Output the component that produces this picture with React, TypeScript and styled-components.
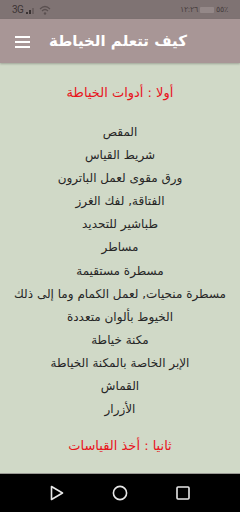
import React from 'react';
import styled, { createGlobalStyle } from 'styled-components';

const GlobalStyle = createGlobalStyle`
  html, body {
    margin: 0;
    padding: 0;
    background: #d0d9c7;
  }
  body {
    font-family: "DejaVu Sans", "Noto Sans", sans-serif;
  }
`;

const tools = [
  'المقص',
  'شريط القياس',
  'ورق مقوى لعمل الباترون',
  'الفتاقة, لفك الغرز',
  'طباشير للتحديد',
  'مساطر',
  'مسطرة مستقيمة',
  'مسطرة منحيات, لعمل الكمام وما إلى ذلك',
  'الخيوط بألوان متعددة',
  'مكنة خياطة',
  'الإبر الخاصة بالمكنة الخياطة',
  'القماش',
  'الأزرار',
];

const App = () => {
  return (
    <Screen>
      <GlobalStyle />
      <StatusBar>
        <StatusLeft>
          <span>3G</span>
          <svg width="10" height="8" viewBox="0 0 10 8">
            <rect x="0" y="6" width="2" height="2" fill="#3a3333" />
            <rect x="3" y="4" width="2" height="4" fill="#3a3333" />
            <rect x="6" y="2" width="2" height="6" fill="#6a5f5f" />
          </svg>
          <svg width="12" height="10" viewBox="0 0 12 10">
            <path d="M1 4 Q6 -1 11 4" stroke="#5a5050" strokeWidth="1.2" fill="none" />
            <path d="M3 6 Q6 3 9 6" stroke="#5a5050" strokeWidth="1.2" fill="none" />
            <circle cx="6" cy="8.5" r="1.2" fill="#5a5050" />
          </svg>
        </StatusLeft>
        <StatusRight>
          <span>١٢:٢٦</span>
          <Battery />
          <span>٥٥٪</span>
        </StatusRight>
      </StatusBar>
      <AppBar>
        <Title>كيف تتعلم الخياطة</Title>
        <Menu>
          <i />
          <i />
          <i />
        </Menu>
      </AppBar>
      <Content>
        <Heading>أولا : أدوات الخياطة</Heading>
        <List>
          {tools.map((t) => (
            <Item key={t}>{t}</Item>
          ))}
        </List>
        <Heading>ثانيا : أخذ القياسات</Heading>
      </Content>
      <NavBar>
        <svg width="14" height="16" viewBox="0 0 14 16">
          <path d="M1.5 1.5 L12.5 8 L1.5 14.5 Z" stroke="#e8e8e8" strokeWidth="1.6" fill="none" strokeLinejoin="round" />
        </svg>
        <svg width="16" height="16" viewBox="0 0 16 16">
          <circle cx="8" cy="8" r="6.6" stroke="#e8e8e8" strokeWidth="1.6" fill="none" />
        </svg>
        <svg width="14" height="14" viewBox="0 0 14 14">
          <rect x="1" y="1" width="12" height="12" rx="1" stroke="#e8e8e8" strokeWidth="1.6" fill="none" />
        </svg>
      </NavBar>
    </Screen>
  );
};

const Screen = styled.div`
  width: 240px;
  height: 512px;
  display: flex;
  flex-direction: column;
  background: #d0d9c7;
  overflow: hidden;
`;

const StatusBar = styled.div`
  height: 19px;
  background: #7f7373;
  display: flex;
  align-items: center;
  justify-content: space-between;
  padding: 0 12px;
  color: #3d3535;
  font-size: 9px;
  font-family: "Roboto", sans-serif;
`;

const StatusLeft = styled.div`
  display: flex;
  align-items: center;
  gap: 3px;
  > span {
    font-size: 10px;
    letter-spacing: -0.5px;
  }
`;

const StatusRight = styled.div`
  display: flex;
  align-items: center;
  gap: 2px;
  font-size: 8px;
  color: #4a4141;
`;

const Battery = styled.div`
  width: 14px;
  height: 6px;
  background: #948888;
  border-radius: 1px;
`;

const AppBar = styled.div`
  height: 44px;
  background: #a89696;
  display: flex;
  align-items: center;
  justify-content: center;
  position: relative;
  box-shadow: 0 1px 2px rgba(0, 0, 0, 0.25);
  z-index: 1;
`;

const Title = styled.div`
  color: #ffffff;
  font-size: 15px;
  font-weight: bold;
  direction: rtl;
  margin-left: -4px;
`;

const Menu = styled.div`
  position: absolute;
  left: 15px;
  top: 17px;
  display: flex;
  flex-direction: column;
  gap: 3px;
  > i {
    display: block;
    width: 15px;
    height: 2px;
    background: #ffffff;
  }
`;

const Content = styled.div`
  flex: 1;
  direction: rtl;
  text-align: center;
  padding-top: 21px;
`;

const Heading = styled.div`
  color: #e8141c;
  font-size: 13px;
  line-height: 18px;
`;

const List = styled.div`
  display: flex;
  flex-direction: column;
  padding: 19px 0 16px;
`;

const Item = styled.div`
  color: #262626;
  font-size: 12px;
  line-height: 23.1px;
  white-space: nowrap;
`;

const NavBar = styled.div`
  height: 38px;
  background: #000;
  border-top: 1px solid #9a9a94;
  display: flex;
  align-items: center;
  justify-content: space-between;
  padding: 0 50px;
`;

export default App;
